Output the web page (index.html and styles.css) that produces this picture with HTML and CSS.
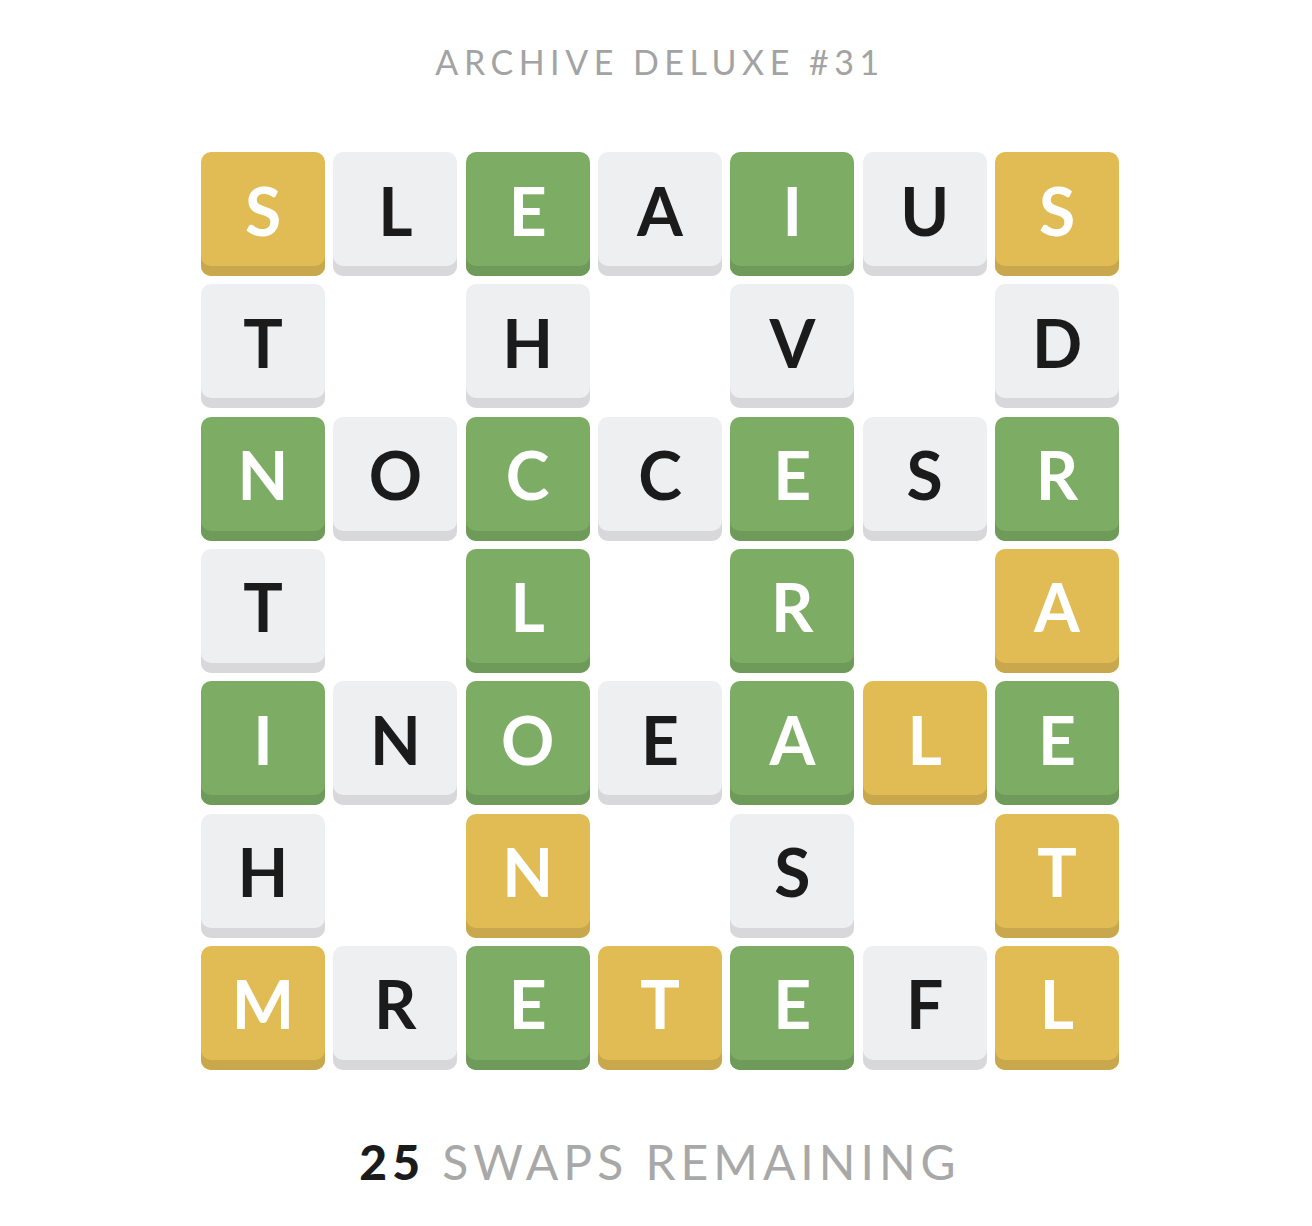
FILE: index.html
```html
<!DOCTYPE html>
<html>
<head>
<meta charset="utf-8">
<link rel="stylesheet" href="styles.css">
</head>
<body>
<main class="page">
  <h1 class="title">ARCHIVE DELUXE #31</h1>
  <div class="board">
    <div class="tile y">S</div><div class="tile g">L</div><div class="tile G">E</div><div class="tile g">A</div><div class="tile G">I</div><div class="tile g">U</div><div class="tile y">S</div>
    <div class="tile g">T</div><div class="empty"></div><div class="tile g">H</div><div class="empty"></div><div class="tile g">V</div><div class="empty"></div><div class="tile g">D</div>
    <div class="tile G">N</div><div class="tile g">O</div><div class="tile G">C</div><div class="tile g">C</div><div class="tile G">E</div><div class="tile g">S</div><div class="tile G">R</div>
    <div class="tile g">T</div><div class="empty"></div><div class="tile G">L</div><div class="empty"></div><div class="tile G">R</div><div class="empty"></div><div class="tile y">A</div>
    <div class="tile G">I</div><div class="tile g">N</div><div class="tile G">O</div><div class="tile g">E</div><div class="tile G">A</div><div class="tile y">L</div><div class="tile G">E</div>
    <div class="tile g">H</div><div class="empty"></div><div class="tile y">N</div><div class="empty"></div><div class="tile g">S</div><div class="empty"></div><div class="tile y">T</div>
    <div class="tile y">M</div><div class="tile g">R</div><div class="tile G">E</div><div class="tile y">T</div><div class="tile G">E</div><div class="tile g">F</div><div class="tile y">L</div>
  </div>
  <p class="status"><span class="count">25</span> SWAPS REMAINING</p>
</main>
</body>
</html>
```

FILE: styles.css
```css
html, body {
  margin: 0;
  background: #ffffff;
}
.page {
  width: 1320px;
  display: flex;
  flex-direction: column;
  align-items: center;
  font-family: Lato, "Open Sans", sans-serif;
}
.title {
  margin: 40px 0 0;
  height: 44px;
  line-height: 44px;
  font-size: 34px;
  font-weight: 400;
  letter-spacing: 5.5px;
  color: #a3a3a3;
}
.board {
  margin-top: 68px;
  display: grid;
  grid-template-columns: repeat(7, 124px);
  grid-auto-rows: 124px;
  gap: 8.33px;
}
.tile {
  border-radius: 10px;
  display: flex;
  align-items: center;
  justify-content: center;
  padding-bottom: 8px;
  box-sizing: border-box;
  font-size: 66px;
  font-weight: 700;
  color: #1b1b1b;
}
.tile.g {
  background: #eeeff1;
  box-shadow: inset 0 -10px 0 #d8d8da;
}
.tile.G {
  background: #7dad65;
  box-shadow: inset 0 -10px 0 #6f9b5a;
  color: #ffffff;
}
.tile.y {
  background: #e1bc54;
  box-shadow: inset 0 -10px 0 #c9a74c;
  color: #ffffff;
}
.status {
  margin: 64px 0 0;
  font-size: 48px;
  line-height: 56px;
  letter-spacing: 5px;
  color: #a8a8a8;
}
.count {
  font-weight: 900;
  color: #1b1b1b;
}
```
